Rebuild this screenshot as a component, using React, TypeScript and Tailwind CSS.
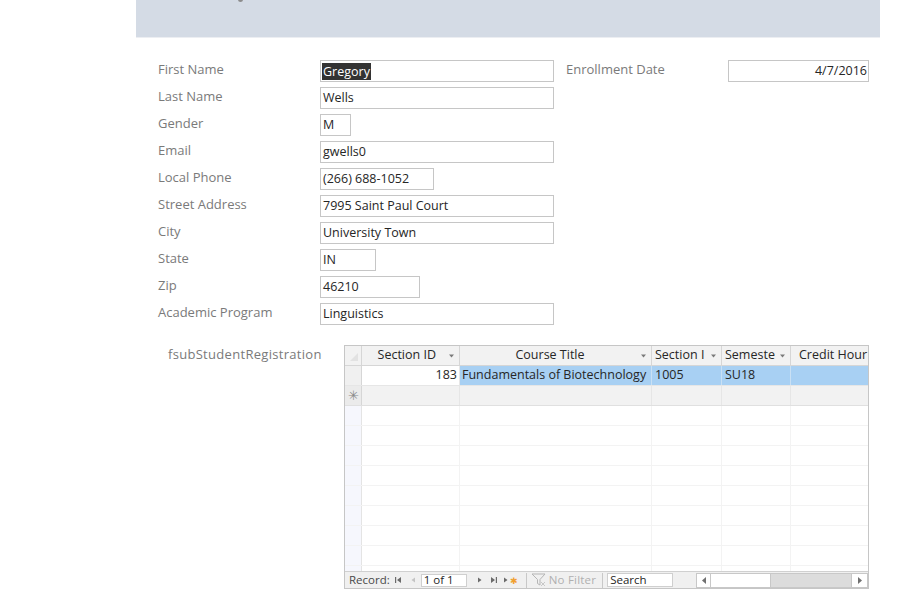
import React from 'react';

const fields = [
  { label: 'First Name', value: 'Gregory', w: 'w-[234px]', selected: true },
  { label: 'Last Name', value: 'Wells', w: 'w-[234px]' },
  { label: 'Gender', value: 'M', w: 'w-[31px]' },
  { label: 'Email', value: 'gwells0', w: 'w-[234px]' },
  { label: 'Local Phone', value: '(266) 688-1052', w: 'w-[114px]' },
  { label: 'Street Address', value: '7995 Saint Paul Court', w: 'w-[234px]' },
  { label: 'City', value: 'University Town', w: 'w-[234px]' },
  { label: 'State', value: 'IN', w: 'w-[56px]' },
  { label: 'Zip', value: '46210', w: 'w-[100px]' },
  { label: 'Academic Program', value: 'Linguistics', w: 'w-[234px]' },
];

const Arrow = () => (
  <svg width="7" height="4" viewBox="0 0 7 4" className="shrink-0">
    <path d="M1 0.5 L6 0.5 L3.5 3.5 Z" fill="#7a7a7a" />
  </svg>
);

const Field = ({ value, w, selected }: { value: string; w: string; selected?: boolean }) => (
  <div className={`${w} h-[22px] border border-[#c6c6c6] bg-white flex items-center px-[1px] text-[12.5px] text-[#262626] overflow-hidden whitespace-nowrap`}>
    {selected ? <span className="bg-[#333333] text-white leading-[17px] px-[1px]">{value}</span> : <span className="px-[1px]">{value}</span>}
  </div>
);

const NavIcon = ({ d, light }: { d: string; light?: boolean }) => (
  <svg width="8" height="8" viewBox="0 0 8 8" className="shrink-0">
    <path d={d} fill={light ? '#c4c4c4' : '#6b6b6b'} />
  </svg>
);

const Datasheet = () => {
  const empty = Array.from({ length: 11 });
  return (
    <div className="w-[525px] h-[244px] border border-[#c6c6c6] flex flex-col overflow-hidden text-[12.5px] text-[#262626] bg-white">
      {/* header */}
      <div className="flex h-[20px] bg-[#f2f2f2] border-b border-[#d6d6d6] shrink-0">
        <div className="w-[17px] border-r border-[#d6d6d6] relative">
          <svg width="10" height="10" viewBox="0 0 10 10" className="absolute right-[2px] bottom-[3px]">
            <path d="M9 1 L9 9 L1 9 Z" fill="#e2e2e2" />
          </svg>
        </div>
        <div className="w-[98px] border-r border-[#d6d6d6] flex items-center justify-end gap-[12px] pr-[4px]">
          <span>Section ID</span>
          <Arrow />
        </div>
        <div className="w-[192px] border-r border-[#d6d6d6] flex items-center pr-[4px]">
          <span className="flex-1 text-center">Course Title</span>
          <Arrow />
        </div>
        <div className="w-[70px] border-r border-[#d6d6d6] flex items-center pl-[3px] pr-[4px] gap-[2px]">
          <span className="flex-1 overflow-hidden whitespace-nowrap">Section I</span>
          <Arrow />
        </div>
        <div className="w-[69px] border-r border-[#d6d6d6] flex items-center pl-[3px] pr-[4px] gap-[2px]">
          <span className="flex-1 overflow-hidden whitespace-nowrap">Semeste</span>
          <Arrow />
        </div>
        <div className="w-[77px] flex items-center pl-[8px] overflow-hidden whitespace-nowrap">Credit Hour</div>
      </div>
      {/* rows */}
      <div className="flex-1 overflow-hidden">
        <div className="flex h-[20px] border-b border-[#e6e6e6]">
          <div className="w-[17px] bg-[#f0f0f0] border-r border-[#d6d6d6]" />
          <div className="w-[98px] bg-white border-r border-[#e6e6e6] flex items-center justify-end pr-[2px]">183</div>
          <div className="w-[192px] bg-[#a8d0f3] border-r border-[#c9e0f4] flex items-center pl-[2px] whitespace-nowrap overflow-hidden">Fundamentals of Biotechnology</div>
          <div className="w-[70px] bg-[#a8d0f3] border-r border-[#c9e0f4] flex items-center pl-[3px]">1005</div>
          <div className="w-[69px] bg-[#a8d0f3] border-r border-[#c9e0f4] flex items-center pl-[3px]">SU18</div>
          <div className="w-[77px] bg-[#a8d0f3]" />
        </div>
        <div className="flex h-[20px] bg-[#f2f2f2] border-b border-[#e0e0e0]">
          <div className="w-[17px] bg-[#ebebeb] border-r border-[#d6d6d6] flex items-center justify-center text-[#8a8a8a] text-[13px]">✳</div>
          <div className="w-[98px] border-r border-[#e6e6e6]" />
          <div className="w-[192px] border-r border-[#e6e6e6]" />
          <div className="w-[70px] border-r border-[#e6e6e6]" />
          <div className="w-[69px] border-r border-[#e6e6e6]" />
          <div className="w-[77px]" />
        </div>
        {empty.map((_, i) => (
          <div key={i} className="flex h-[20px] border-b border-[#f3f3f3]">
            <div className="w-[17px] bg-[#f6f7fd] border-r border-[#e4e4e4]" />
            <div className="w-[98px] border-r border-[#f3f3f3]" />
            <div className="w-[192px] border-r border-[#f3f3f3]" />
            <div className="w-[70px] border-r border-[#f3f3f3]" />
            <div className="w-[69px] border-r border-[#f3f3f3]" />
            <div className="w-[77px]" />
          </div>
        ))}
      </div>
      {/* navigation bar */}
      <div className="flex h-[17px] shrink-0 bg-[#f0f0f0] border-t border-[#d0d0d0] items-center text-[11.5px] text-[#4a4a4a]">
        <span className="ml-[4px]">Record:</span>
        <span className="ml-[4px]"><NavIcon d="M1 1 H2.2 V7 H1 Z M7 1 L7 7 L3 4 Z" /></span>
        <span className="ml-[7px]"><NavIcon d="M6 1.5 L6 6.5 L2.5 4 Z" light /></span>
        <div className="ml-[4px] w-[46px] h-[13px] bg-white border border-[#cfcfcf] flex items-center pl-[2px] text-[#262626] leading-none">1 of 1</div>
        <span className="ml-[9px]"><NavIcon d="M2 1.5 L2 6.5 L5.5 4 Z" /></span>
        <span className="ml-[6px]"><NavIcon d="M1 1 L5 4 L1 7 Z M5.8 1 H7 V7 H5.8 Z" /></span>
        <span className="ml-[5px] flex items-center">
          <NavIcon d="M1 1.5 L1 6.5 L4.5 4 Z" />
          <span className="text-[#f0a030] text-[9px] leading-none -ml-[1px]">✱</span>
        </span>
        <div className="ml-[8px] w-px h-[15px] bg-[#c8c8c8]" />
        <svg width="16" height="14" viewBox="0 0 16 14" className="ml-[4px] shrink-0">
          <path d="M1 1 H14 L9 6.5 V12 L6.5 10.5 V6.5 Z" fill="none" stroke="#b5b5b5" strokeWidth="1" />
          <path d="M10 9 L14 13 M14 9 L10 13" stroke="#c8c8c8" strokeWidth="1" />
        </svg>
        <span className="ml-[2px] text-[#b0b0b0] tracking-[0.2px]">No Filter</span>
        <div className="ml-[6px] w-px h-[15px] bg-[#c8c8c8]" />
        <div className="ml-[4px] w-[66px] h-[14px] bg-white border border-[#cfcfcf] flex items-center pl-[2px] text-[#262626] leading-none">Search</div>
        <div className="w-[23px]" />
        <div className="flex-1 h-[15px] flex border border-[#c8c8c8] bg-[#dcdcdc]">
          <div className="w-[14px] bg-white border-r border-[#c8c8c8] flex items-center justify-center">
            <svg width="4" height="7" viewBox="0 0 4 7"><path d="M4 0 L4 7 L0 3.5 Z" fill="#707070" /></svg>
          </div>
          <div className="w-[60px] bg-white border-r border-[#c8c8c8]" />
          <div className="flex-1" />
          <div className="w-[16px] bg-white border-l border-[#c8c8c8] flex items-center justify-center">
            <svg width="4" height="7" viewBox="0 0 4 7"><path d="M0 0 L0 7 L4 3.5 Z" fill="#707070" /></svg>
          </div>
        </div>
      </div>
    </div>
  );
};

export default function App() {
  return (
    <div className="min-h-screen bg-white font-['Open_Sans',sans-serif]">
      <div className="ml-[136px] w-[744px] h-[37px] bg-[#d4dbe5] relative overflow-hidden">
        <div className="absolute left-[102px] -top-[3px] w-[5px] h-[5px] rounded-full bg-[#8c8c8c]" />
      </div>
      <div className="ml-[136px] w-[744px] h-px bg-[#eceef2]" />

      <div className="pl-[158px] pt-[22px] flex flex-col gap-[5px]">
        {fields.map((f, i) => (
          <div key={f.label} className="flex items-center h-[22px]">
            <div className="w-[162px] text-[13px] text-[#7a7a7a] -mt-[2px]">{f.label}</div>
            <Field value={f.value} w={f.w} selected={f.selected} />
            {i === 0 && (
              <>
                <div className="w-[162px] ml-[12px] text-[13px] text-[#7a7a7a] -mt-[2px]">Enrollment Date</div>
                <div className="w-[141px] h-[22px] border border-[#c6c6c6] flex items-center justify-end pr-[1px] text-[12.5px] text-[#262626]">4/7/2016</div>
              </>
            )}
          </div>
        ))}

        <div className="flex mt-[15px]">
          <div className="w-[186px] pl-[10px] text-[13px] tracking-[0.3px] text-[#7a7a7a]">fsubStudentRegistration</div>
          <Datasheet />
        </div>
      </div>
    </div>
  );
}
